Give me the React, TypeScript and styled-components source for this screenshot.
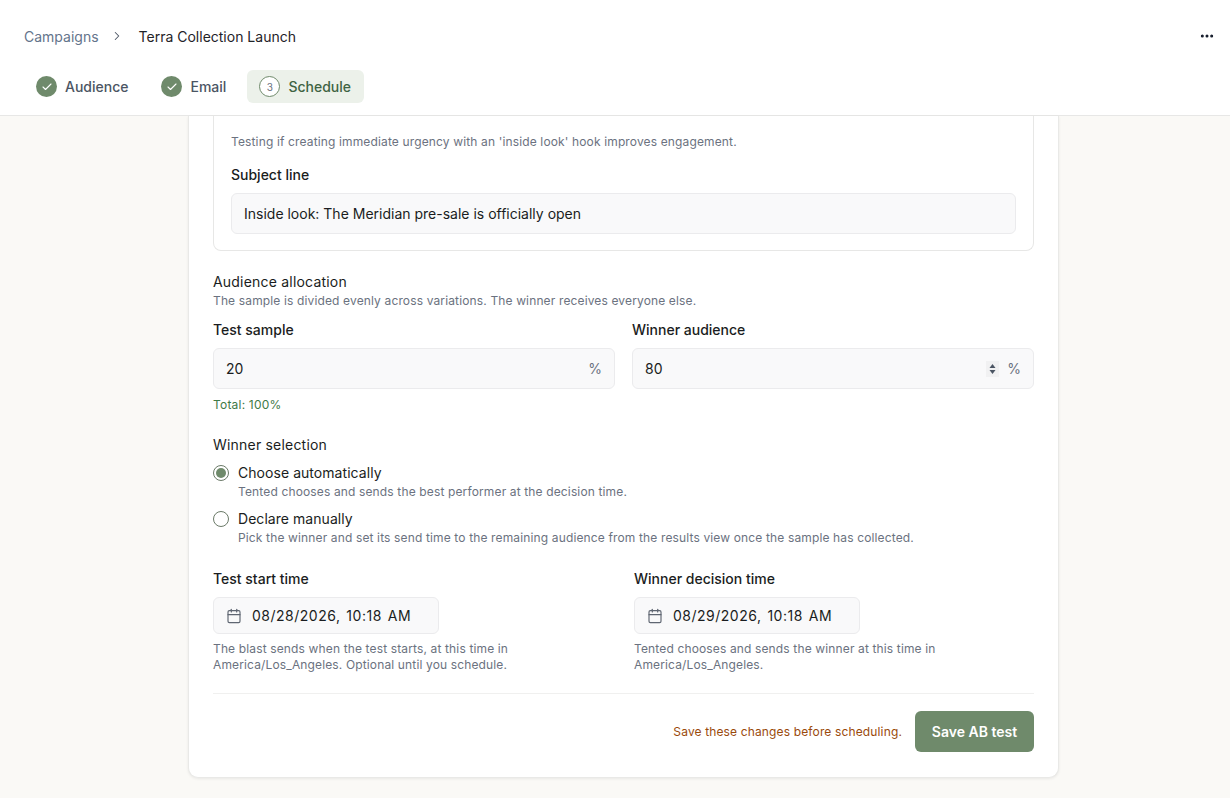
import React from 'react';
import styled, { createGlobalStyle } from 'styled-components';
import { Check, ChevronRight, Ellipsis, Calendar } from 'lucide-react';

const GlobalStyle = createGlobalStyle`
  html, body {
    margin: 0;
    height: 100%;
    background: #faf9f6;
    font-family: Inter, "Liberation Sans", sans-serif;
    color: #111827;
    -webkit-font-smoothing: antialiased;
  }
  * { box-sizing: border-box; }
`;

const Page = styled.div`
  height: 798px;
  display: flex;
  flex-direction: column;
  overflow: hidden;
`;

const Header = styled.header`
  height: 116px;
  flex-shrink: 0;
  background: #fff;
  border-bottom: 1px solid #e7e7e6;
  padding: 0 15px 0 24px;
`;

const TopRow = styled.div`
  height: 70px;
  padding-top: 2px;
  display: flex;
  align-items: center;
  justify-content: space-between;
`;

const Breadcrumb = styled.nav`
  display: flex;
  align-items: center;
  font-size: 14px;
`;

const CrumbLink = styled.span`
  color: #64748b;
`;

const CrumbSep = styled.span`
  display: flex;
  color: #4b5563;
  margin: 0 15px 0 11px;
`;

const CrumbCurrent = styled.span`
  color: #1f2328;
`;

const MoreButton = styled.button`
  display: flex;
  border: 0;
  padding: 0;
  background: none;
  color: #111827;
`;

const Steps = styled.div`
  display: flex;
  align-items: center;
  height: 33px;
  gap: 9px;
`;

const Step = styled.div<{ $active?: boolean }>`
  height: 33px;
  display: flex;
  align-items: center;
  gap: 8px;
  padding: 0 ${({ $active }) => ($active ? 13 : 12)}px 0 12px;
  border-radius: 6px;
  font-size: 14px;
  font-weight: 500;
  color: ${({ $active }) => ($active ? '#3f6343' : '#4b5563')};
  background: ${({ $active }) => ($active ? '#ecf1ea' : 'transparent')};
`;

const StepDone = styled.span`
  width: 21px;
  height: 21px;
  border-radius: 50%;
  background: #6f8a6b;
  color: #fff;
  display: flex;
  align-items: center;
  justify-content: center;
`;

const StepNumber = styled.span`
  width: 21px;
  height: 21px;
  border-radius: 50%;
  border: 1px solid #6f8a6b;
  background: #fff;
  color: #6b7280;
  font-size: 10px;
  font-weight: 400;
  display: flex;
  align-items: center;
  justify-content: center;
`;

const Main = styled.main`
  flex: 1;
  display: flex;
  justify-content: center;
  padding-left: 17px;
`;

const Card = styled.section`
  width: 871px;
  height: 662px;
  background: #fff;
  border: 1px solid #e9e9e7;
  border-top: 0;
  border-radius: 0 0 10px 10px;
  box-shadow: 0 1px 3px rgba(0, 0, 0, 0.07);
  padding: 0 24px;
`;

const VariationCard = styled.div`
  height: 135px;
  border: 1px solid #e7e7e6;
  border-top: 0;
  border-radius: 0 0 8px 8px;
  padding: 18px 17px 0;
`;

const Hint = styled.p`
  margin: 0;
  font-size: 12px;
  line-height: 16px;
  letter-spacing: 0.14px;
  color: #6b7280;
`;

const Label = styled.div`
  font-size: 14px;
  line-height: 20px;
  font-weight: 500;
  color: #1a1d21;
`;

const SubjectLabel = styled(Label)`
  margin: 15px 0 8px;
`;

const FieldBox = styled.div`
  height: 41px;
  display: flex;
  align-items: center;
  background: #f9f9fa;
  border: 1px solid #ebebed;
  border-radius: 6px;
  padding: 0 12px;
`;

const TextInput = styled.input`
  flex: 1;
  min-width: 0;
  border: 0;
  outline: 0;
  padding: 0;
  background: transparent;
  font: inherit;
  font-size: 14px;
  color: #1a1d21;
`;

const SectionTitle = styled.div`
  font-size: 14px;
  line-height: 20px;
  font-weight: 400;
  letter-spacing: 0.2px;
  color: #1a1d21;
`;

const SectionHint = styled(Hint)`
  margin-top: 1px;
`;

const Allocation = styled.div`
  margin-top: 21px;
`;

const AllocationGrid = styled.div`
  display: grid;
  grid-template-columns: 1fr 1fr;
  gap: 17px;
  margin-top: 11px;
`;

const FieldLabel = styled(Label)`
  margin-bottom: 8px;
`;

const Suffix = styled.span`
  margin-left: 8px;
  font-size: 14px;
  color: #6b7280;
`;

const Stepper = styled.svg`
  display: block;
  background: #f1f1f2;
`;

const Total = styled.div`
  margin-top: 8px;
  font-size: 12px;
  line-height: 16px;
  letter-spacing: 0.2px;
  color: #3f7a47;
`;

const WinnerSelection = styled.div`
  margin-top: 22px;
`;

const RadioRow = styled.label`
  display: grid;
  grid-template-columns: 16px 1fr;
  column-gap: 9px;
  row-gap: 1px;
  align-items: center;
  margin-top: 8px;

  & + & {
    margin-top: 9px;
  }
`;

const Radio = styled.span<{ $checked?: boolean }>`
  width: 16px;
  height: 16px;
  border-radius: 50%;
  border: 1px solid #6b7a68;
  background: #fff;
  display: flex;
  align-items: center;
  justify-content: center;

  &::after {
    content: '';
    display: ${({ $checked }) => ($checked ? 'block' : 'none')};
    width: 10px;
    height: 10px;
    border-radius: 50%;
    background: #6f8a6b;
  }
`;

const RadioText = styled.span`
  font-size: 14px;
  line-height: 20px;
  letter-spacing: 0.05px;
  color: #1a1d21;
`;

const RadioHint = styled(Hint)`
  grid-column: 2;
`;

const TimeGrid = styled.div`
  display: grid;
  grid-template-columns: 399px 399px;
  gap: 22px;
  margin-top: 23px;
`;

const DateBox = styled.div`
  width: 226px;
  height: 37px;
  display: flex;
  align-items: center;
  gap: 10px;
  padding: 0 12px;
  background: #f9f9fa;
  border: 1px solid #ebebed;
  border-radius: 6px;
  color: #5f6672;
`;

const DateText = styled.span`
  font-size: 14px;
  letter-spacing: 0.5px;
  word-spacing: 1.5px;
  color: #1a1d21;
  white-space: pre;
`;

const TimeHint = styled(Hint)`
  margin-top: 7px;
`;

const Divider = styled.hr`
  border: 0;
  border-top: 1px solid #f0f0ef;
  margin: 20px 0 17px;
`;

const Footer = styled.div`
  display: flex;
  justify-content: flex-end;
  align-items: center;
  gap: 13px;
`;

const Warning = styled.span`
  font-size: 12px;
  letter-spacing: 0.14px;
  color: #9a4a0c;
`;

const SaveButton = styled.button`
  width: 119px;
  height: 41px;
  border: 0;
  border-radius: 6px;
  background: #6f8a6b;
  color: #fff;
  font: inherit;
  font-size: 14px;
  font-weight: 600;
`;

const NumberField: React.FC<{ value: string; stepper?: boolean }> = ({ value, stepper }) => (
  <FieldBox>
    <TextInput readOnly value={value} />
    {stepper && (
      <Stepper width="13" height="16" viewBox="0 0 13 16">
        <path d="M6.5 3 L9.5 7 L3.5 7 Z" fill="#4b5563" />
        <path d="M6.5 13 L9.5 9 L3.5 9 Z" fill="#4b5563" />
      </Stepper>
    )}
    <Suffix>%</Suffix>
  </FieldBox>
);

const TimeField: React.FC<{ label: string; value: string; hint: React.ReactNode }> = ({
  label,
  value,
  hint
}) => (
  <div>
    <FieldLabel>{label}</FieldLabel>
    <DateBox>
      <Calendar size={16} strokeWidth={1.75} />
      <DateText>{value}</DateText>
    </DateBox>
    <TimeHint>{hint}</TimeHint>
  </div>
);

const App: React.FC = () => (
  <Page>
    <GlobalStyle />
    <Header>
      <TopRow>
        <Breadcrumb>
          <CrumbLink>Campaigns</CrumbLink>
          <CrumbSep>
            <ChevronRight size={14} strokeWidth={1.75} />
          </CrumbSep>
          <CrumbCurrent>Terra Collection Launch</CrumbCurrent>
        </Breadcrumb>
        <MoreButton>
          <Ellipsis size={16} strokeWidth={2.5} />
        </MoreButton>
      </TopRow>
      <Steps>
        <Step>
          <StepDone>
            <Check size={12} strokeWidth={2.25} />
          </StepDone>
          Audience
        </Step>
        <Step>
          <StepDone>
            <Check size={12} strokeWidth={2.25} />
          </StepDone>
          Email
        </Step>
        <Step $active>
          <StepNumber>3</StepNumber>
          Schedule
        </Step>
      </Steps>
    </Header>
    <Main>
      <Card>
        <VariationCard>
          <Hint>Testing if creating immediate urgency with an 'inside look' hook improves engagement.</Hint>
          <SubjectLabel>Subject line</SubjectLabel>
          <FieldBox>
            <TextInput readOnly value="Inside look: The Meridian pre-sale is officially open" />
          </FieldBox>
        </VariationCard>

        <Allocation>
          <SectionTitle>Audience allocation</SectionTitle>
          <SectionHint>The sample is divided evenly across variations. The winner receives everyone else.</SectionHint>
          <AllocationGrid>
            <div>
              <FieldLabel>Test sample</FieldLabel>
              <NumberField value="20" />
            </div>
            <div>
              <FieldLabel>Winner audience</FieldLabel>
              <NumberField value="80" stepper />
            </div>
          </AllocationGrid>
          <Total>Total: 100%</Total>
        </Allocation>

        <WinnerSelection>
          <SectionTitle>Winner selection</SectionTitle>
          <RadioRow>
            <Radio $checked />
            <RadioText>Choose automatically</RadioText>
            <RadioHint>Tented chooses and sends the best performer at the decision time.</RadioHint>
          </RadioRow>
          <RadioRow>
            <Radio />
            <RadioText>Declare manually</RadioText>
            <RadioHint>
              Pick the winner and set its send time to the remaining audience from the results view once the sample has collected.
            </RadioHint>
          </RadioRow>
        </WinnerSelection>

        <TimeGrid>
          <TimeField
            label="Test start time"
            value="08/28/2026, 10:18 AM"
            hint="The blast sends when the test starts, at this time in America/Los_Angeles. Optional until you schedule."
          />
          <TimeField
            label="Winner decision time"
            value="08/29/2026, 10:18 AM"
            hint="Tented chooses and sends the winner at this time in America/Los_Angeles."
          />
        </TimeGrid>

        <Divider />
        <Footer>
          <Warning>Save these changes before scheduling.</Warning>
          <SaveButton>Save AB test</SaveButton>
        </Footer>
      </Card>
    </Main>
  </Page>
);

export default App;
